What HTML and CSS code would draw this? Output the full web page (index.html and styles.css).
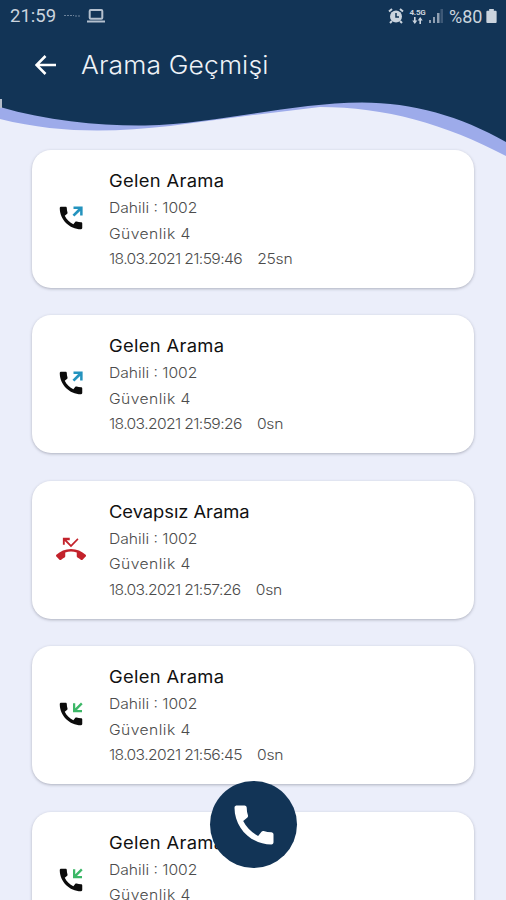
FILE: index.html
```html
<!DOCTYPE html>
<html lang="tr">
<head>
<meta charset="utf-8">
<title>Arama Geçmişi</title>
<link rel="stylesheet" href="styles.css">
</head>
<body>
<svg width="0" height="0" class="defs">
  <symbol id="phone" viewBox="0 0 24 24"><path d="M20.01 15.38c-1.23 0-2.42-.2-3.53-.56-.35-.12-.74-.03-1.01.24l-1.57 1.97c-2.83-1.35-5.48-3.9-6.89-6.83l1.95-1.66c.27-.28.35-.67.24-1.02-.37-1.11-.56-2.3-.56-3.53 0-.54-.45-.99-.99-.99H4.19C3.65 3 3 3.24 3 3.99 3 13.28 10.73 21 20.01 21c.71 0 .99-.63.99-1.18v-3.45c0-.54-.45-.99-.99-.99z"/></symbol>
  <symbol id="outgoing" viewBox="0 0 24 24"><use href="#phone"/><path class="blue" d="M14 2.700h7.300V10h-2V6.300l-4.600 4.500-1.500-1.500 4.500-4.600H14z"/></symbol>
  <symbol id="incoming" viewBox="0 0 24 24"><use href="#phone"/><path class="green" d="M21.300 4.100 16.800 8.700h4v1.800h-7.200V3.300h1.800v4l4.600-4.500z"/></symbol>
  <symbol id="missed" viewBox="0 0 24 24"><path d="M7 5.500 12 10.500l6-6.200-.9-.9L12 8.500 8.500 5H11V3H5.500v5.500H7V5.500zm16.710 11.170C20.660 13.780 16.540 12 12 12S3.340 13.780.29 16.670c-.18.18-.29.43-.29.710s.11.53.29.710l2.480 2.480c.18.18.43.290.710.290.27 0 .52-.1.700-.28.790-.740 1.690-1.360 2.660-1.850.33-.16.560-.5.560-.9v-3.100c1.450-.48 3-.730 4.600-.730s3.150.25 4.600.720v3.100c0 .39.23.740.560.9.980.490 1.870 1.120 2.670 1.850.18.18.43.280.700.280.28 0 .53-.11.710-.29l2.480-2.480c.18-.18.290-.43.290-.710s-.12-.52-.3-.7z"/></symbol>
</svg>
<div class="screen">
  <header class="header">
    <svg class="wave" viewBox="0 0 506 160" width="506" height="160">
      <path class="wave-back" d="M0 0V119C60 134 115 132 170 126L253 115L320 107C385 107 445 124 506 156V0Z"/>
      <path class="wave-front" d="M0 0V107C48 121 101 126 145 125.500C220 123.500 290 103 362 102.500C413 102.500 460 116 506 142V0Z"/>
      <path class="wave-edge" d="M0 99h2v9H0z"/>
    </svg>
    <div class="status">
      <span class="clock">21:59</span>
      <svg class="note" width="18" height="4" viewBox="0 0 18 4"><path d="M0 1.500h10M11 2h6" /></svg>
      <svg class="laptop" width="18" height="14" viewBox="0 0 18 14"><rect x="2.700" y="1" width="12.600" height="8.800" rx="1"/><path d="M0 12.500h18"/></svg>
      <span class="grow"></span>
      <svg class="alarm" width="16" height="16" viewBox="0 0 16 16"><circle cx="8" cy="8.500" r="6"/><path class="stroke" d="M1 3.500 4 1M12 1l3 2.500M4 13l-2 2M12 13l2 2"/><path class="hands" d="M8 5v4h3"/></svg>
      <span class="network"><span class="net-label">4.5G</span><svg width="11" height="7" viewBox="0 0 11 7"><path d="M2 0h1.600v3.500H5.300L2.800 7 .3 3.500H2zM7.400 7H9V3.500h1.700L8.200 0 5.700 3.500h1.700z"/></svg></span>
      <svg class="signal" width="14" height="14" viewBox="0 0 14 14"><path d="M0 11h2v3H0zM4 8h2v6H4zM8 4h2.500v10H8z"/><path opacity=".35" d="M11.500 0H14v14h-2.500z"/></svg>
      <span class="percent">%80</span>
      <svg class="battery" width="11" height="14" viewBox="0 0 11 15"><path d="M3 0h5v2h2q1 0 1 1v11q0 1-1 1H1q-1 0-1-1V3q0-1 1-1h2z"/></svg>
    </div>
    <div class="bar">
      <svg class="back" width="22" height="20" viewBox="0 0 22 20"><path d="M10.500 1 1.500 10l9 9M1.500 10H21"/></svg>
      <h1>Arama Geçmişi</h1>
    </div>
  </header>
  <main class="list">
    <article class="card"><svg class="icon"><use href="#outgoing"/></svg><div class="info"><h2>Gelen Arama</h2><p class="ext">Dahili : 1002</p><p class="place">Güvenlik 4</p><p class="when"><span class="date">18.03.2021 21:59:46</span><span class="dur">25sn</span></p></div></article>
    <article class="card"><svg class="icon"><use href="#outgoing"/></svg><div class="info"><h2>Gelen Arama</h2><p class="ext">Dahili : 1002</p><p class="place">Güvenlik 4</p><p class="when"><span class="date">18.03.2021 21:59:26</span><span class="dur">0sn</span></p></div></article>
    <article class="card"><svg class="icon missed"><use href="#missed"/></svg><div class="info"><h2 class="long">Cevapsız Arama</h2><p class="ext">Dahili : 1002</p><p class="place">Güvenlik 4</p><p class="when"><span class="date">18.03.2021 21:57:26</span><span class="dur">0sn</span></p></div></article>
    <article class="card"><svg class="icon"><use href="#incoming"/></svg><div class="info"><h2>Gelen Arama</h2><p class="ext">Dahili : 1002</p><p class="place">Güvenlik 4</p><p class="when"><span class="date">18.03.2021 21:56:45</span><span class="dur">0sn</span></p></div></article>
    <article class="card"><svg class="icon"><use href="#incoming"/></svg><div class="info"><h2>Gelen Arama</h2><p class="ext">Dahili : 1002</p><p class="place">Güvenlik 4</p></div></article>
  </main>
  <button class="fab" aria-label="Ara"><svg width="52" height="52"><use href="#phone"/></svg></button>
</div>
</body>
</html>
```
FILE: styles.css
```css
* { box-sizing: border-box; margin: 0; padding: 0; }
body { background: #ebeefa; font-family: Inter, "Open Sans", sans-serif; }
.defs { position: absolute; }
.screen { position: relative; width: 506px; height: 900px; overflow: hidden; }
.header { position: relative; height: 150px; color: #eef2f7; }
.wave { position: absolute; top: 0; left: 0; z-index: -1; }
.wave-back { fill: #9dabea; }
.wave-front { fill: #123456; }
.wave-edge { fill: #b4bdcb; }

.status { display: flex; align-items: center; height: 32px; padding: 0 9px 0 10px; color: #cbd4de; font-family: Roboto, sans-serif; }
.clock { width: 46px; font-size: 18.500px; }
.note { margin-left: 8px; fill: none; stroke: #6c829a; stroke-dasharray: 2 1; }
.laptop { margin-left: 5px; fill: none; stroke: #b4c0ce; stroke-width: 2; }
.grow { flex: 1; }
.alarm { fill: #cbd4de; }
.alarm .stroke { fill: none; stroke: #cbd4de; stroke-width: 2; }
.alarm .hands { fill: none; stroke: #123456; stroke-width: 1.500; }
.network { display: flex; flex-direction: column; align-items: center; width: 17px; margin-left: 5px; }
.net-label { font-size: 8px; line-height: 8px; font-weight: 700; letter-spacing: -.2px; }
.network svg { fill: #cbd4de; }
.signal { margin-left: 3px; fill: #8f9fb2; }
.percent { width: 34px; margin-left: 6px; font-size: 18px; }
.battery { margin-left: 3px; fill: #cbd4de; }

.bar { display: flex; align-items: center; height: 66px; padding-left: 35px; }
.back { fill: none; stroke: #fff; stroke-width: 2.600; }
h1 { margin-left: 24px; font-size: 25px; font-weight: 350; letter-spacing: .1px; white-space: nowrap; transform: scaleX(1.06); transform-origin: left; }

.list { display: flex; flex-direction: column; gap: 27.400px; padding: 0 32px; }
.card { display: flex; flex: none; height: 138px; padding: 18px 24px; background: #fff; border-radius: 19px; box-shadow: 0 1px 3px rgba(60, 64, 80, .35); }
.icon { flex: none; width: 30px; height: 30px; margin-top: 35px; fill: #0c0c0c; }
.icon.missed { fill: #c3222b; }
.blue { fill: #2493be; }
.green { fill: #3cb767; }
.info { margin-left: 23px; white-space: nowrap; transform: scaleX(1.08); transform-origin: left; }
h2 { height: 27px; line-height: 27px; color: #111; font-size: 17px; font-weight: 400; letter-spacing: .3px; }
h2.long { letter-spacing: -.050px; }
p { height: 25.500px; line-height: 26px; color: #4c4c4c; font-size: 14.500px; font-weight: 300; }
.ext { letter-spacing: 0; }
.place { letter-spacing: .4px; }
.when { display: flex; }
.date { letter-spacing: -.570px; }
.dur { margin-left: 14px; letter-spacing: -.2px; }

.fab { position: absolute; left: 210px; top: 781px; display: flex; align-items: center; justify-content: center; width: 87px; height: 87px; border: 0; border-radius: 50%; background: #123456; fill: #fff; }
```
